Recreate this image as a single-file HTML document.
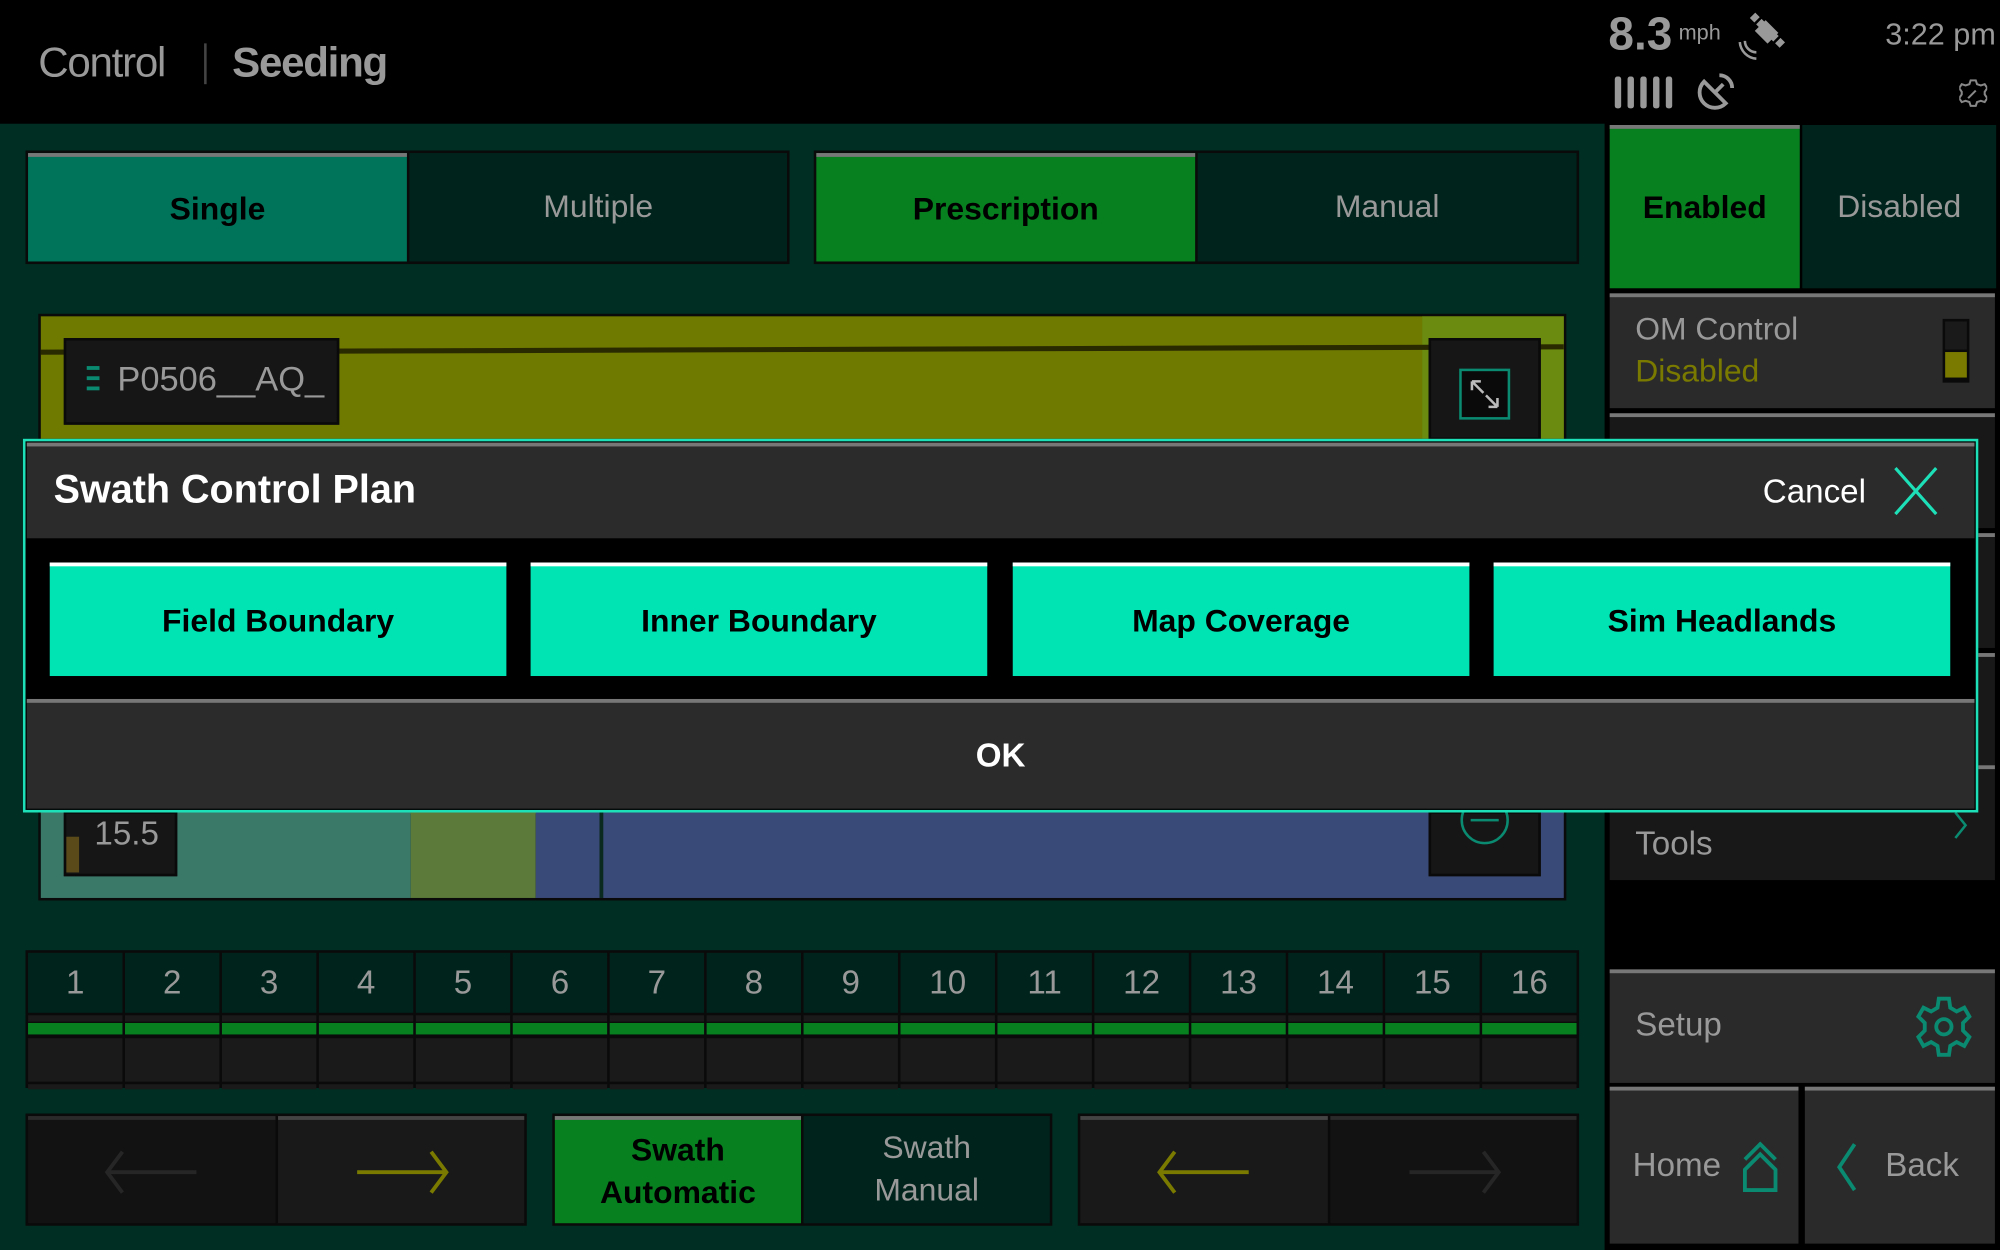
<!DOCTYPE html>
<html><head><meta charset="utf-8"><style>
*{margin:0;padding:0;box-sizing:border-box}
html,body{width:2000px;height:1250px;overflow:hidden;background:#000}
#s{position:absolute;left:0;top:0;width:1568px;height:980px;transform:scale(1.27551);transform-origin:0 0;font-family:"Liberation Sans",sans-serif;background:#000}
.a{position:absolute}
.c{display:flex;align-items:center;justify-content:center;text-align:center}
.t{border-top:3px solid #777}
</style></head><body><div id="s">
<!-- header -->
<div class="a" style="left:30px;top:30px;font-size:33px;color:#999;letter-spacing:-1px">Control</div>
<div class="a" style="left:160px;top:34px;width:2px;height:32px;background:#444"></div>
<div class="a" style="left:182px;top:30px;font-size:33px;color:#999;font-weight:bold;letter-spacing:-1px">Seeding</div>
<div class="a" style="left:1261px;top:6px;font-size:36px;color:#999;font-weight:bold">8.3</div>
<div class="a" style="left:1316px;top:16px;font-size:17px;color:#999">mph</div>
<svg class="a" style="left:1360px;top:8px" width="42" height="42" viewBox="0 0 42 42" fill="none" stroke="#999"><path d="M14 4l24 24" stroke-width="6" stroke-dasharray="5 2"/><path d="M20 12l10 10" stroke-width="12"/><path d="M8 24a9 9 0 0 0 9 9M4 25a14 14 0 0 0 13 13" stroke-width="2"/></svg>
<div class="a" style="left:1478px;top:14px;font-size:24px;color:#999">3:22 pm</div>
<div class="a" style="left:1266px;top:60px;display:flex;gap:5px"><i style="width:5px;height:25px;background:#999;border-radius:2px"></i><i style="width:5px;height:25px;background:#999;border-radius:2px"></i><i style="width:5px;height:25px;background:#999;border-radius:2px"></i><i style="width:5px;height:25px;background:#999;border-radius:2px"></i><i style="width:5px;height:25px;background:#999;border-radius:2px"></i></div>
<svg class="a" style="left:1328px;top:56px" width="34" height="34" viewBox="0 0 34 34" fill="none" stroke="#999" stroke-width="3"><path d="M8 8a12 12 0 0 0 17 17z"/><path d="M16 17l7-7M20 3a10 10 0 0 1 10 10"/></svg>
<svg class="a" style="left:1536px;top:62px" width="22" height="22" viewBox="0 0 22 22" fill="none" stroke="#888" stroke-width="1.6"><path d="M9 1h4l1 3 3 1 3-1 2 3-2 3v2l2 3-2 3-3-1-3 1-1 3H9l-1-3-3-1-3 1-2-3 2-3v-2L0 7l2-3 3 1 3-1z"/><path d="M7 15l6-6"/></svg>

<!-- main green area -->
<div class="a" style="left:0;top:97px;width:1258px;height:883px;background:#002e22"></div>

<!-- toggles -->
<div class="a" style="left:20px;top:118px;width:599px;height:89px;background:#0a0a0a"></div>
<div class="a c t" style="left:22px;top:120px;width:297px;height:85px;background:#00745a;font-size:25px;font-weight:bold;color:#000">Single</div>
<div class="a c" style="left:321px;top:120px;width:296px;height:85px;background:#00241c;font-size:25px;color:#999">Multiple</div>
<div class="a" style="left:638px;top:118px;width:600px;height:89px;background:#0a0a0a"></div>
<div class="a c t" style="left:640px;top:120px;width:297px;height:85px;background:#078020;font-size:25px;font-weight:bold;color:#000">Prescription</div>
<div class="a c" style="left:939px;top:120px;width:297px;height:85px;background:#00241c;font-size:25px;color:#999">Manual</div>

<!-- map -->
<div class="a" style="left:30px;top:246px;width:1198px;height:460px;background:#0a0a0a"></div>
<div class="a" style="left:32px;top:248px;width:1194px;height:390px;background:#6e7a00"></div>
<div class="a" style="left:1115px;top:248px;width:111px;height:100px;background:#6a8a10"></div>
<div class="a" style="left:32px;top:272px;width:1194px;height:4px;background:#2a2a00;transform:rotate(-0.2deg)"></div>
<div class="a" style="left:32px;top:635px;width:290px;height:69px;background:#3a7868"></div>
<div class="a" style="left:322px;top:635px;width:98px;height:69px;background:#5c7a3a"></div>
<div class="a" style="left:420px;top:635px;width:806px;height:69px;background:#3a4a78"></div>
<div class="a" style="left:470px;top:635px;width:3px;height:69px;background:#0a2a20"></div>
<div class="a" style="left:50px;top:265px;width:216px;height:68px;background:#161616;border:2px solid #0a0a0a"></div>
<div class="a" style="left:68px;top:287px;width:10px;height:3px;background:#0a8a70;box-shadow:0 8px #0a8a70,0 16px #0a8a70"></div>
<div class="a" style="left:92px;top:282px;font-size:27px;color:#999">P0506__AQ_</div>
<div class="a" style="left:1120px;top:265px;width:88px;height:80px;background:#161616;border:2px solid #0a0a0a"></div>
<div class="a" style="left:1144px;top:289px;width:40px;height:40px;border:2px solid #0a8a70;background:#0a0a0a"></div>
<svg class="a" style="left:1148px;top:293px" width="32" height="32" viewBox="0 0 32 32" fill="none" stroke="#bbb" stroke-width="2"><path d="M6 6l9 9M6 6h7M6 6v7M26 26l-9-9M26 26h-7M26 26v-7"/></svg>
<div class="a" style="left:50px;top:636px;width:89px;height:51px;background:#161616;border:2px solid #0a0a0a"></div>
<div class="a" style="left:52px;top:656px;width:10px;height:28px;background:#5a4a1a"></div>
<div class="a" style="left:74px;top:638px;font-size:26px;color:#999">15.5</div>
<div class="a" style="left:1120px;top:636px;width:88px;height:51px;background:#161616;border:2px solid #0a0a0a"></div>
<div class="a" style="left:1145px;top:624px;width:38px;height:38px;border:2px solid #0a8a70;border-radius:50%"></div>
<div class="a" style="left:1153px;top:642px;width:22px;height:2px;background:#0a8a70"></div>

<!-- section grid -->
<div class="a" style="left:20px;top:745px;width:1218px;height:108px;background:#0a0a0a"></div>
<div class="a" style="left:22px;top:747px;width:1214px;height:104px;display:grid;grid-template-columns:repeat(16,1fr);gap:0 2px">
<script>
for(let i=1;i<=16;i++)document.write('<div style="position:relative;height:104px"><div class="c" style="height:47px;background:#00241c;color:#999;font-size:26px">'+i+'</div><div style="height:5px;margin-top:2px;background:#1a1a1a"></div><div style="height:9px;margin-top:1px;background:#078020"></div><div style="height:34px;margin-top:3px;background:#1a1a1a"></div><div style="height:4px;margin-top:2px;background:#1a1a1a"></div></div>');
</script>
</div>

<!-- bottom buttons -->
<div class="a" style="left:20px;top:873px;width:393px;height:88px;background:#0a0a0a"></div>
<div class="a c" style="left:22px;top:875px;width:194px;height:84px;background:#121212;border-top:3px solid #2a2a2a"><svg width="80" height="40" viewBox="0 0 80 40" fill="none" stroke="#262626" stroke-width="3"><path d="M5 20h70M17 4L5 20l12 16"/></svg></div>
<div class="a c" style="left:218px;top:875px;width:193px;height:84px;background:#191919;border-top:3px solid #444"><svg width="80" height="40" viewBox="0 0 80 40" fill="none" stroke="#7a7a00" stroke-width="3"><path d="M5 20h70M63 4l12 16-12 16"/></svg></div>
<div class="a" style="left:433px;top:873px;width:392px;height:88px;background:#0a0a0a"></div>
<div class="a c t" style="left:435px;top:875px;width:193px;height:84px;background:#078020;color:#000;font-weight:bold;font-size:25px;line-height:33px">Swath<br>Automatic</div>
<div class="a c" style="left:630px;top:875px;width:193px;height:84px;background:#00241c;color:#999;font-size:25px;line-height:33px">Swath<br>Manual</div>
<div class="a" style="left:845px;top:873px;width:393px;height:88px;background:#0a0a0a"></div>
<div class="a c" style="left:847px;top:875px;width:194px;height:84px;background:#191919;border-top:3px solid #444"><svg width="80" height="40" viewBox="0 0 80 40" fill="none" stroke="#7a7a00" stroke-width="3"><path d="M5 20h70M17 4L5 20l12 16"/></svg></div>
<div class="a c" style="left:1043px;top:875px;width:193px;height:84px;background:#121212;border-top:3px solid #2a2a2a"><svg width="80" height="40" viewBox="0 0 80 40" fill="none" stroke="#262626" stroke-width="3"><path d="M5 20h70M63 4l12 16-12 16"/></svg></div>

<!-- right panel -->
<div class="a c t" style="left:1262px;top:98px;width:149px;height:128px;background:#078020;color:#000;font-weight:bold;font-size:25px">Enabled</div>
<div class="a c" style="left:1413px;top:98px;width:152px;height:128px;background:#00241c;color:#999;font-size:25px">Disabled</div>
<div class="a t" style="left:1262px;top:230px;width:302px;height:90px;background:#2a2a2a"></div>
<div class="a" style="left:1282px;top:242px;font-size:25px;color:#999;line-height:33px">OM Control<br><span style="color:#7a7a00">Disabled</span></div>
<div class="a" style="left:1523px;top:250px;width:21px;height:50px;background:#0a0a0a;padding:2px"><div style="height:22px;background:#1a1a1a"></div><div style="height:20px;margin-top:2px;background:#7a7a00"></div></div>
<div class="a t" style="left:1262px;top:324px;width:302px;height:90px;background:#181818"></div>
<div class="a t" style="left:1262px;top:418px;width:302px;height:90px;background:#181818"></div>
<div class="a t" style="left:1262px;top:512px;width:302px;height:90px;background:#181818"></div>
<div class="a t" style="left:1262px;top:600px;width:302px;height:90px;background:#181818"></div>
<div class="a" style="left:1282px;top:646px;font-size:26px;color:#999">Tools</div>
<svg class="a" style="left:1530px;top:635px" width="14" height="24" viewBox="0 0 14 24" fill="none" stroke="#0a8a70" stroke-width="2"><path d="M3 2l8 10-8 10"/></svg>
<div class="a t" style="left:1262px;top:760px;width:302px;height:89px;background:#2a2a2a"></div>
<div class="a" style="left:1282px;top:788px;font-size:26px;color:#999">Setup</div>
<svg class="a" style="left:1502px;top:780px" width="44" height="50" viewBox="0 0 44 50" fill="none" stroke="#0a8a70" stroke-width="3"><path d="M18 3h8l1 7 5 3 6-3 4 7-5 5v6l5 5-4 7-6-3-5 3-1 7h-8l-1-7-5-3-6 3-4-7 5-5v-6l-5-5 4-7 6 3 5-3z"/><circle cx="22" cy="25" r="6"/></svg>
<div class="a t" style="left:1262px;top:852px;width:148px;height:123px;background:#2a2a2a"></div>
<div class="a" style="left:1280px;top:898px;font-size:26px;color:#999">Home</div>
<svg class="a" style="left:1364px;top:895px" width="32" height="40" viewBox="0 0 32 40" fill="none" stroke="#0a8a70" stroke-width="3"><path d="M4 14L16 2l12 12M4 22L16 10l12 12v16H4z"/></svg>
<div class="a t" style="left:1415px;top:852px;width:149px;height:123px;background:#2a2a2a"></div>
<svg class="a" style="left:1438px;top:895px" width="20" height="40" viewBox="0 0 20 40" fill="none" stroke="#0a8a70" stroke-width="3"><path d="M16 2L4 20l12 18"/></svg>
<div class="a" style="left:1478px;top:898px;font-size:26px;color:#999">Back</div>

<!-- modal -->
<div class="a" style="left:18px;top:344px;width:1533px;height:293px;border:2px solid #1de0b8;background:#000"></div>
<div class="a t" style="left:21px;top:347px;width:1527px;height:75px;background:#2b2b2b"></div>
<div class="a" style="left:42px;top:366px;font-size:31px;color:#fff;font-weight:bold">Swath Control Plan</div>
<div class="a" style="left:1382px;top:370px;font-size:26px;color:#fff">Cancel</div>
<svg class="a" style="left:1484px;top:366px" width="36" height="38" viewBox="0 0 36 38" fill="none" stroke="#1de0b8" stroke-width="2.5"><path d="M2 1l32 36M34 1L2 37"/></svg>
<div class="a c" style="left:39px;top:441px;width:358px;height:89px;background:#00e4b4;border-top:3px solid #fff;font-size:25px;font-weight:bold;color:#000">Field Boundary</div>
<div class="a c" style="left:416px;top:441px;width:358px;height:89px;background:#00e4b4;border-top:3px solid #fff;font-size:25px;font-weight:bold;color:#000">Inner Boundary</div>
<div class="a c" style="left:794px;top:441px;width:358px;height:89px;background:#00e4b4;border-top:3px solid #fff;font-size:25px;font-weight:bold;color:#000">Map Coverage</div>
<div class="a c" style="left:1171px;top:441px;width:358px;height:89px;background:#00e4b4;border-top:3px solid #fff;font-size:25px;font-weight:bold;color:#000">Sim Headlands</div>
<div class="a c t" style="left:21px;top:548px;width:1527px;height:86px;background:#2b2b2b;font-size:26px;font-weight:bold;color:#fff">OK</div>
</div></body></html>
